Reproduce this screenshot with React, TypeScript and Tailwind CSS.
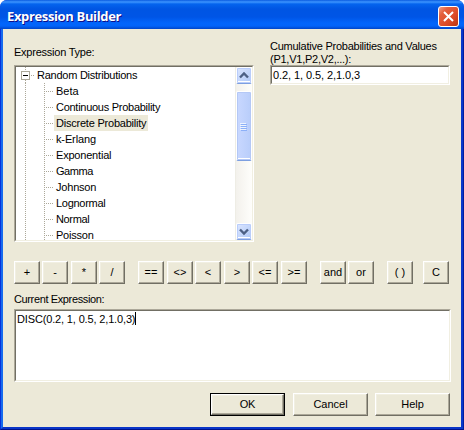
import React from "react";

const dotsY = "bg-[repeating-linear-gradient(to_bottom,#aca899_0_1px,transparent_1px_2px)]";
const dotsX = "bg-[repeating-linear-gradient(to_right,#aca899_0_1px,transparent_1px_2px)]";
const sunken =
  "bg-white border border-t-[#aca899] border-l-[#aca899] border-r-white border-b-white";
const sunkenInner =
  "border border-t-[#716f64] border-l-[#716f64] border-r-[#f1efe2] border-b-[#f1efe2]";
const raised =
  "border border-t-white border-l-white border-r-[#716f64] border-b-[#716f64] bg-[#ece9d8] shadow-[inset_-1px_-1px_0_#aca899,inset_1px_1px_0_#f1efe2]";

const items: [string, string][] = [
  ["Beta", "tracking-[0px]"],
  ["Continuous Probability", "tracking-[-0.27px]"],
  ["Discrete Probability", "tracking-[-0.22px]"],
  ["k-Erlang", "tracking-[-0.13px]"],
  ["Exponential", "tracking-[-0.2px]"],
  ["Gamma", "tracking-[-0.45px]"],
  ["Johnson", "tracking-[-0.2px]"],
  ["Lognormal", "tracking-[-0.28px]"],
  ["Normal", "tracking-[-0.35px]"],
  ["Poisson", "tracking-[-0.22px]"],
];

const operators: [string, string][] = [
  ["+", ""],
  ["-", "ml-[2px]"],
  ["*", "ml-[3px]"],
  ["/", "ml-[2px]"],
  ["==", "ml-[13px]"],
  ["<>", "ml-[3px]"],
  ["<", "ml-[2px]"],
  [">", "ml-[3px]"],
  ["<=", "ml-[2px]"],
  [">=", "ml-[3px]"],
  ["and", "ml-[13px]"],
  ["or", "ml-[2px]"],
  ["( )", "ml-[13px]"],
  ["C", "ml-[10px]"],
];

function TreeItem({ label, tracking, selected }: { label: string; tracking: string; selected: boolean }) {
  return (
    <div className="flex h-4 shrink-0">
      <div className={`ml-[9px] h-4 w-px ${dotsY}`} />
      <div className={`ml-[18px] h-4 w-px ${dotsY}`} />
      <div className={`mt-2 ml-px h-px w-[7px] ${dotsX}`} />
      <div className={`ml-px h-4 pr-[2px] pl-[2px] leading-[17px] whitespace-nowrap ${selected ? "bg-[#ece9d8]" : ""}`}>
        <span className={tracking}>{label}</span>
      </div>
    </div>
  );
}

function ScrollButton({ down }: { down?: boolean }) {
  return (
    <div className="h-[17px] w-4 shrink-0 rounded-[2px] border border-white border-b-[#7d9fe0] bg-linear-to-br from-[#dce6ff] to-[#aec8f7] shadow-[inset_0_0_0_1px_#b9cdfb,inset_0_-2px_0_#ffffff]">
      <svg viewBox="0 0 14 15" width="14" height="15" fill="none" stroke="#4d6185" strokeWidth="2.4">
        <path d={down ? "M3 5.5 7 9.5 11 5.5" : "M3 9.5 7 5.5 11 9.5"} />
      </svg>
    </div>
  );
}

export default function App() {
  return (
    <div className="flex h-[430px] w-[464px] flex-col overflow-hidden bg-white font-['Liberation_Sans',Arial,sans-serif] text-[11px] text-black">
      <div className="flex h-full flex-col overflow-hidden rounded-t-[7px] bg-[#0831d9]">
        <div className="flex h-[29px] shrink-0 items-center justify-between bg-[linear-gradient(to_bottom,#0a5be0_0,#3d95ff_2px,#0464ee_4px,#0055e3_9px,#0055e6_17px,#0265fb_23px,#0264fa_26px,#0045c8_29px)] pr-[5px] pl-[7px]">
          <span className="mt-[3px] font-['Open_Sans',sans-serif] text-[13px] leading-4 font-bold tracking-[-0.36px] whitespace-nowrap text-white [text-shadow:1px_1px_0_#0f1089]">
            Expression Builder
          </span>
          <div className="mt-[3px] flex h-[21px] w-[21px] items-center justify-center rounded-[3px] border border-white bg-[linear-gradient(135deg,#f0a088_0%,#e4603e_25%,#dc4a26_65%,#b93510_100%)]">
            <svg viewBox="0 0 13 13" width="13" height="13" stroke="#fff" strokeWidth="2">
              <path d="M2 2 11 11M11 2 2 11" />
            </svg>
          </div>
        </div>
        <div className="flex h-[401px] border-r border-b border-l border-r-[#001da0] border-b-[#00138c] border-l-[#0831d9]">
          <div className="flex w-[462px] flex-col border-r-2 border-b-2 border-l-2 border-r-[#0838cc] border-b-[#0a35c8] border-l-[#166aee] bg-[#ece9d8] pl-[11px]">
            <div className="flex h-[213px] shrink-0">
              <div className="flex w-[240px] shrink-0 flex-col">
                <div className="h-9 pt-[16px] leading-[14px] tracking-[-0.24px]">Expression Type:</div>
                <div className={`h-[177px] ${sunken}`}>
                  <div className={`flex h-full ${sunkenInner}`}>
                    <div className="flex h-[173px] flex-1 flex-col overflow-hidden">
                      <div className="flex h-4 shrink-0">
                        <div className="ml-[5px] flex w-[9px] flex-col items-center">
                          <div className={`h-[4px] w-px shrink-0 ${dotsY}`} />
                          <div className="flex h-[9px] w-[9px] shrink-0 items-center justify-center border border-[#aca899] bg-white">
                            <div className="h-px w-[5px] bg-black" />
                          </div>
                          <div className={`h-[3px] w-px shrink-0 ${dotsY}`} />
                        </div>
                        <div className={`mt-2 ml-px h-px w-[3px] ${dotsX}`} />
                        <div className="ml-[3px] leading-[17px] whitespace-nowrap">
                          <span className="tracking-[-0.25px]">Random Distributions</span>
                        </div>
                      </div>
                      {items.map(([label, tracking]) => (
                        <TreeItem key={label} label={label} tracking={tracking} selected={label === "Discrete Probability"} />
                      ))}
                    </div>
                    <div className="flex h-[173px] w-[17px] flex-col border-l border-[#eeede5] bg-linear-to-r from-[#f3f1ec] to-[#fefefb]">
                      <ScrollButton />
                      <div className="mt-[7px] flex h-[70px] flex-col items-start justify-center gap-px rounded-[2px] border border-white border-b-[#7d9fe0] bg-linear-to-r from-[#c9d8ff] to-[#b8cdfa] pl-[3px] shadow-[inset_0_0_0_1px_#b4c8f6,inset_0_-2px_0_#ffffff]">
                        {[0, 1, 2, 3].map((i) => (
                          <div key={i} className="h-px w-[6px] bg-[#eef4fe] shadow-[1px_1px_0_#8cb0f8]" />
                        ))}
                      </div>
                      <div className="mt-auto">
                        <ScrollButton down />
                      </div>
                    </div>
                  </div>
                </div>
              </div>
              <div className="ml-4 w-[180px]">
                <div className="h-9 pt-[11px] leading-[13px] whitespace-nowrap">
                  <div className="tracking-[-0.245px]">Cumulative Probabilities and Values</div>
                  <div className="tracking-[-0.25px]">(P1,V1,P2,V2,...):</div>
                </div>
                <div className={`h-5 ${sunken}`}>
                  <div className={`h-full pl-px leading-[16px] tracking-[-0.08px] whitespace-nowrap ${sunkenInner}`}>0.2, 1, 0.5, 2,1.0,3</div>
                </div>
              </div>
            </div>
            <div className="mt-[19px] flex h-[23px] shrink-0">
              {operators.map(([label, gap]) => (
                <button key={label} className={`flex h-[23px] w-[26px] shrink-0 justify-center p-0 leading-[20px] ${raised} ${gap}`}>
                  {label}
                </button>
              ))}
            </div>
            <div className="h-[25px] shrink-0 pt-[8px] leading-[14px]">
              <span className="tracking-[-0.37px]">Current Expression:</span>
            </div>
            <div className={`h-[73px] w-[437px] shrink-0 ${sunken}`}>
              <div className={`flex h-full pl-px leading-[16px] whitespace-nowrap ${sunkenInner}`}>
                <span className="tracking-[-0.15px]">DISC(0.2, 1, 0.5, 2,1.0,3)</span>
                <span className="mt-px h-[13px] w-px bg-black" />
              </div>
            </div>
            <div className="mt-[11px] ml-[196px] flex h-[23px] shrink-0">
              <button className="h-[23px] w-[75px] border border-black p-0">
                <span className={`block h-[21px] leading-[18px] tracking-[-0.3px] ${raised}`}>OK</span>
              </button>
              <button className={`ml-2 flex h-[23px] w-[75px] justify-center p-0 leading-[20px] ${raised}`}>Cancel</button>
              <button className={`ml-[7px] flex h-[23px] w-[75px] justify-center p-0 leading-[20px] ${raised}`}>Help</button>
            </div>
          </div>
        </div>
      </div>
    </div>
  );
}
